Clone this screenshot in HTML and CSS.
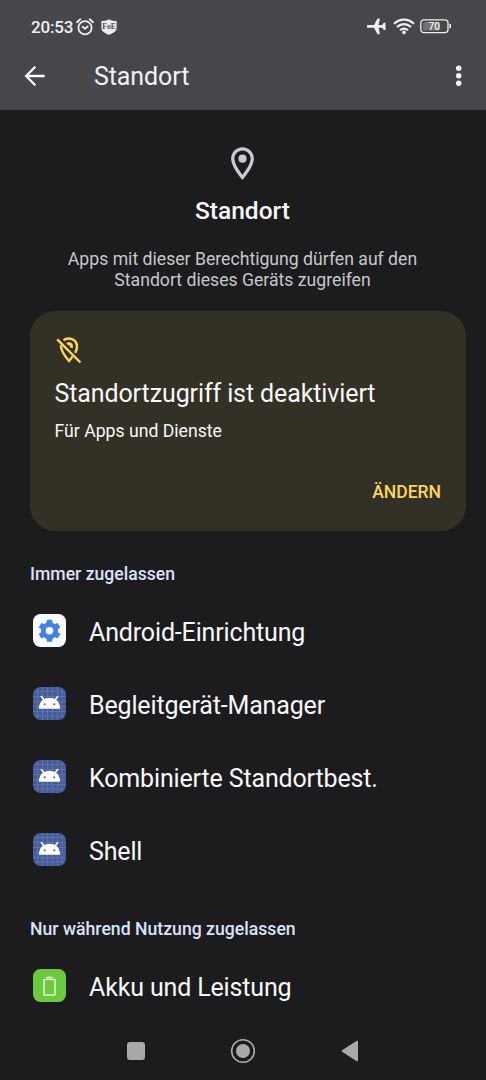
FILE: index.html
```html
<!DOCTYPE html>
<html lang="de">
<head>
<meta charset="utf-8">
<title>Standort</title>
<link rel="stylesheet" href="styles.css">
</head>
<body>
<svg class="defs" width="0" height="0">
  <defs>
    <symbol id="android" viewBox="0 0 33 33">
      <rect width="33" height="33" rx="7.5" fill="#465c9b"/>
      <path d="M4.500 1v31M9.500 0v33M14.500 0v33M19.500 0v33M24.500 0v33M29 1v31M1 4.500h31M0 9.500h33M0 14.500h33M0 19.500h33M0 24.500h33M1 29h31" stroke="#7183b8" stroke-width=".8" opacity=".65"/>
      <path d="M8.300 9.500l3.400 4.200M24.700 9.500l-3.400 4.200" stroke="#fff" stroke-width="1.600" stroke-linecap="round"/>
      <path d="M5.800 21.700C6.100 14.400 10.400 10.700 16.500 10.700S26.900 14.400 27.200 21.700Z" fill="#fff"/>
      <circle cx="11.700" cy="17.200" r="1" fill="#465c9b"/><circle cx="21.300" cy="17.200" r="1" fill="#465c9b"/>
    </symbol>
  </defs>
</svg>
<header class="header">
  <div class="status">
    <span class="time">20:53</span>
    <svg class="alarm" width="18" height="18" viewBox="0 0 18 18" fill="none" stroke="#efeff1" stroke-width="1.800" stroke-linecap="round">
      <circle cx="9" cy="9.700" r="6.600"/><path d="M1 4.200L4.300 1.300M17 4.200L13.700 1.300M6.600 8.700L8.900 10.800L11.700 8.500"/>
    </svg>
    <svg class="shield" width="16" height="16" viewBox="0 0 16 16">
      <path d="M.4 1.700C3 2.200 5.500 1.600 8 .3c2.500 1.300 5 1.900 7.600 1.400V9c0 3.400-3.300 5.100-7.600 6.800C3.700 14.100.4 12.400.4 9Z" fill="#ededef"/>
      <text x="8" y="9.500" class="shield-text">FoE</text>
    </svg>
    <span class="spacer"></span>
    <svg class="plane" width="19" height="17" viewBox="0 0 19 17" fill="#efeff1">
      <path d="M.9 7.100H7L10.500 .6H12.900L11.600 7.100H15.200L16.800 4.700H18.500V12.100H16.800L15.200 9.700H11.600L12.900 16.200H10.500L7 9.700H.9A1.300 1.300 0 0 1 .9 7.100Z"/>
    </svg>
    <svg class="wifi" width="22" height="17" viewBox="0 0 22 17" fill="none" stroke="#efeff1" stroke-width="2.200">
      <path d="M1 5.700C6.800.2 15.200.2 21 5.700M4 9C8.200 5.200 13.800 5.200 18 9M7.100 12.200C9.500 10.200 12.500 10.200 14.900 12.200"/>
      <circle cx="11" cy="14.400" r="1.800" fill="#efeff1" stroke="none"/>
    </svg>
    <svg class="battery" width="32" height="15" viewBox="0 0 32 15">
      <rect x="3" y="3" width="17" height="8.500" rx="1.500" fill="#727275"/>
      <rect x=".8" y=".8" width="27.200" height="12.800" rx="3" fill="none" stroke="#efeff1" stroke-width="1.300"/>
      <path d="M30.200 5v4.300" stroke="#efeff1" stroke-width="1.600"/>
      <text x="14.200" y="10.900" class="battery-text">70</text>
    </svg>
  </div>
  <div class="appbar">
    <svg width="22" height="22" viewBox="0 0 22 22" fill="none" stroke="#fff" stroke-width="2.300"><path d="M20.600 11H2.500M11.300 1.800L2.100 11L11.300 20.200"/></svg>
    <span class="title">Standort</span>
    <svg class="more" width="6" height="22" viewBox="0 0 6 22" fill="#fff"><circle cx="2.700" cy="3.300" r="2.700"/><circle cx="2.700" cy="10.700" r="2.700"/><circle cx="2.700" cy="18.200" r="2.700"/></svg>
  </div>
</header>
<main>
  <section class="hero">
    <svg width="39" height="39" viewBox="0 0 24 24" fill="#cbcad0"><path d="M12 2C8.130 2 5 5.130 5 9c0 5.250 7 13 7 13s7-7.750 7-13c0-3.870-3.130-7-7-7zM7 9c0-2.760 2.240-5 5-5s5 2.240 5 5c0 2.880-2.880 7.190-5 9.880C9.920 16.210 7 11.850 7 9z"/><circle cx="12" cy="9" r="2.500"/></svg>
    <h1>Standort</h1>
    <p>Apps mit dieser Berechtigung dürfen auf den<br>Standort dieses Geräts zugreifen</p>
  </section>
  <section class="card">
    <svg width="28" height="28" viewBox="0 0 28 28" fill="none" stroke="#fcd663" stroke-width="2.400">
      <path d="M8.500 4.300C13.300.3 22 3.300 22 10.700C22 12.800 21.300 14.900 20.200 16.900M5.900 9.300C5.700 15.500 10.500 21 14 25C15.200 23.600 16.400 22 17.500 20.300"/>
      <path d="M12.200 8.200C14.400 6.500 17.300 8.800 16.200 11.700" stroke-width="3"/>
      <path d="M2.200 3.300L25.400 26.500"/>
    </svg>
    <h2>Standortzugriff ist deaktiviert</h2>
    <p>Für Apps und Dienste</p>
    <a class="action">ÄNDERN</a>
  </section>
  <h3>Immer zugelassen</h3>
  <ul>
    <li>
      <svg width="33" height="33" viewBox="0 0 33 33"><rect width="33" height="33" rx="7.500" fill="#fafbff"/>
        <g fill="#4380e6"><circle cx="16.500" cy="16.700" r="8.600"/>
          <rect x="13.700" y="5.700" width="5.600" height="22" rx="1"/><rect x="13.700" y="5.700" width="5.600" height="22" rx="1" transform="rotate(60 16.500 16.700)"/><rect x="13.700" y="5.700" width="5.600" height="22" rx="1" transform="rotate(120 16.500 16.700)"/></g>
        <circle cx="16.500" cy="16.700" r="3.800" fill="#fafbff"/></svg>
      <span>Android-Einrichtung</span>
    </li>
    <li><svg width="33" height="33"><use href="#android"/></svg><span>Begleitgerät-Manager</span></li>
    <li><svg width="33" height="33"><use href="#android"/></svg><span>Kombinierte Standortbest.</span></li>
    <li><svg width="33" height="33"><use href="#android"/></svg><span>Shell</span></li>
  </ul>
  <h3 class="second">Nur während Nutzung zugelassen</h3>
  <ul>
    <li><svg width="33" height="33" viewBox="0 0 33 33" fill="none" stroke="#efffe4" stroke-width="1.300"><rect width="33" height="33" rx="7.500" fill="#6cc83c" stroke="none"/><rect x="11" y="10.500" width="11" height="15.500"/><path d="M13.500 8.500h6" stroke-width="1.600"/></svg><span>Akku und Leistung</span></li>
  </ul>
</main>
<nav class="navbar">
  <svg width="18" height="18"><rect width="18" height="18" rx="3" fill="#a9a9aa"/></svg>
  <svg width="26" height="26" viewBox="0 0 26 26"><circle cx="13" cy="13" r="11.300" fill="none" stroke="#a9a9aa" stroke-width="1.600"/><circle cx="13" cy="13" r="7" fill="#a9a9aa"/></svg>
  <svg width="18" height="22" viewBox="0 0 18 22"><path d="M1.500 11L16.200 1.500V20.500Z" fill="#a9a9aa" stroke="#a9a9aa" stroke-width="1.600" stroke-linejoin="round"/></svg>
</nav>
</body>
</html>
```

FILE: styles.css
```css
* { box-sizing: border-box; margin: 0; padding: 0; }
body { width: 486px; height: 1080px; overflow: hidden; display: flex; flex-direction: column; background: #1c1c1e; color: #f8f8fa; font-family: Roboto, sans-serif; }
svg { display: block; flex: none; }
.defs { position: absolute; }
.header { height: 110px; flex: none; background: #47464b; }
.status { display: flex; align-items: center; height: 42px; padding: 11px 34px 0 31px; }
.time { font-size: 17px; font-weight: 500; letter-spacing: -.2px; line-height: 20px; width: 45px; white-space: nowrap; color: #efeff1; }
.shield { margin-left: 7px; }
.shield-text { font: bold 7.500px "Liberation Serif", serif; fill: #47464b; text-anchor: middle; }
.spacer { flex: 1; }
.plane { margin-right: 1px; }
.wifi { margin-left: 6px; }
.battery { margin-left: 5px; }
.battery-text { font: 500 10px Roboto, sans-serif; fill: #f4f4f6; text-anchor: middle; }
.appbar { display: flex; align-items: center; height: 67px; padding: 0 24px; }
.title { flex: 1; margin-left: 48px; font-size: 25px; letter-spacing: -.1px; line-height: 30px; padding-top: 2px; color: #f3f2f7; }
main { flex: 1; min-height: 0; }
.hero { height: 200.500px; padding: 34px 1px 0 0; display: flex; flex-direction: column; align-items: center; text-align: center; }
h1 { font-size: 24.500px; font-weight: 500; line-height: 28px; margin-top: 14px; }
.hero p { margin-top: 24px; font-size: 17.650px; line-height: 21px; color: #c8c7cd; white-space: nowrap; }
.card { margin: 0 20px 0 30px; height: 220px; border-radius: 25px; background: #333025; padding: 25.500px 25px 0 24.500px; display: flex; flex-direction: column; }
h2 { font-size: 25px; letter-spacing: -.11px; font-weight: 400; line-height: 30px; margin-top: 15px; white-space: nowrap; }
.card p { font-size: 17.650px; line-height: 22px; margin-top: 11px; }
.action { align-self: flex-end; margin-top: 39px; font-size: 17.500px; line-height: 22px; font-weight: 500; color: #fcd663; }
h3 { margin: 32px 0 10px 30px; font-size: 17.600px; line-height: 22px; font-weight: 500; color: #dce2f9; white-space: nowrap; }
h3.second { margin-top: 31px; margin-bottom: 10px; font-size: 17.650px; }
ul { list-style: none; }
li { display: flex; align-items: center; height: 73px; padding-left: 33px; font-size: 25px; letter-spacing: -.15px; line-height: 30px; white-space: nowrap; }
li svg { margin: 0 23px 2px 0; }
li span { padding-top: 3px; }
.navbar { position: absolute; left: 0; top: 1021px; width: 486px; height: 59px; background: #1c1c1e; display: flex; align-items: center; justify-content: space-between; padding: 0 127px; }
```
